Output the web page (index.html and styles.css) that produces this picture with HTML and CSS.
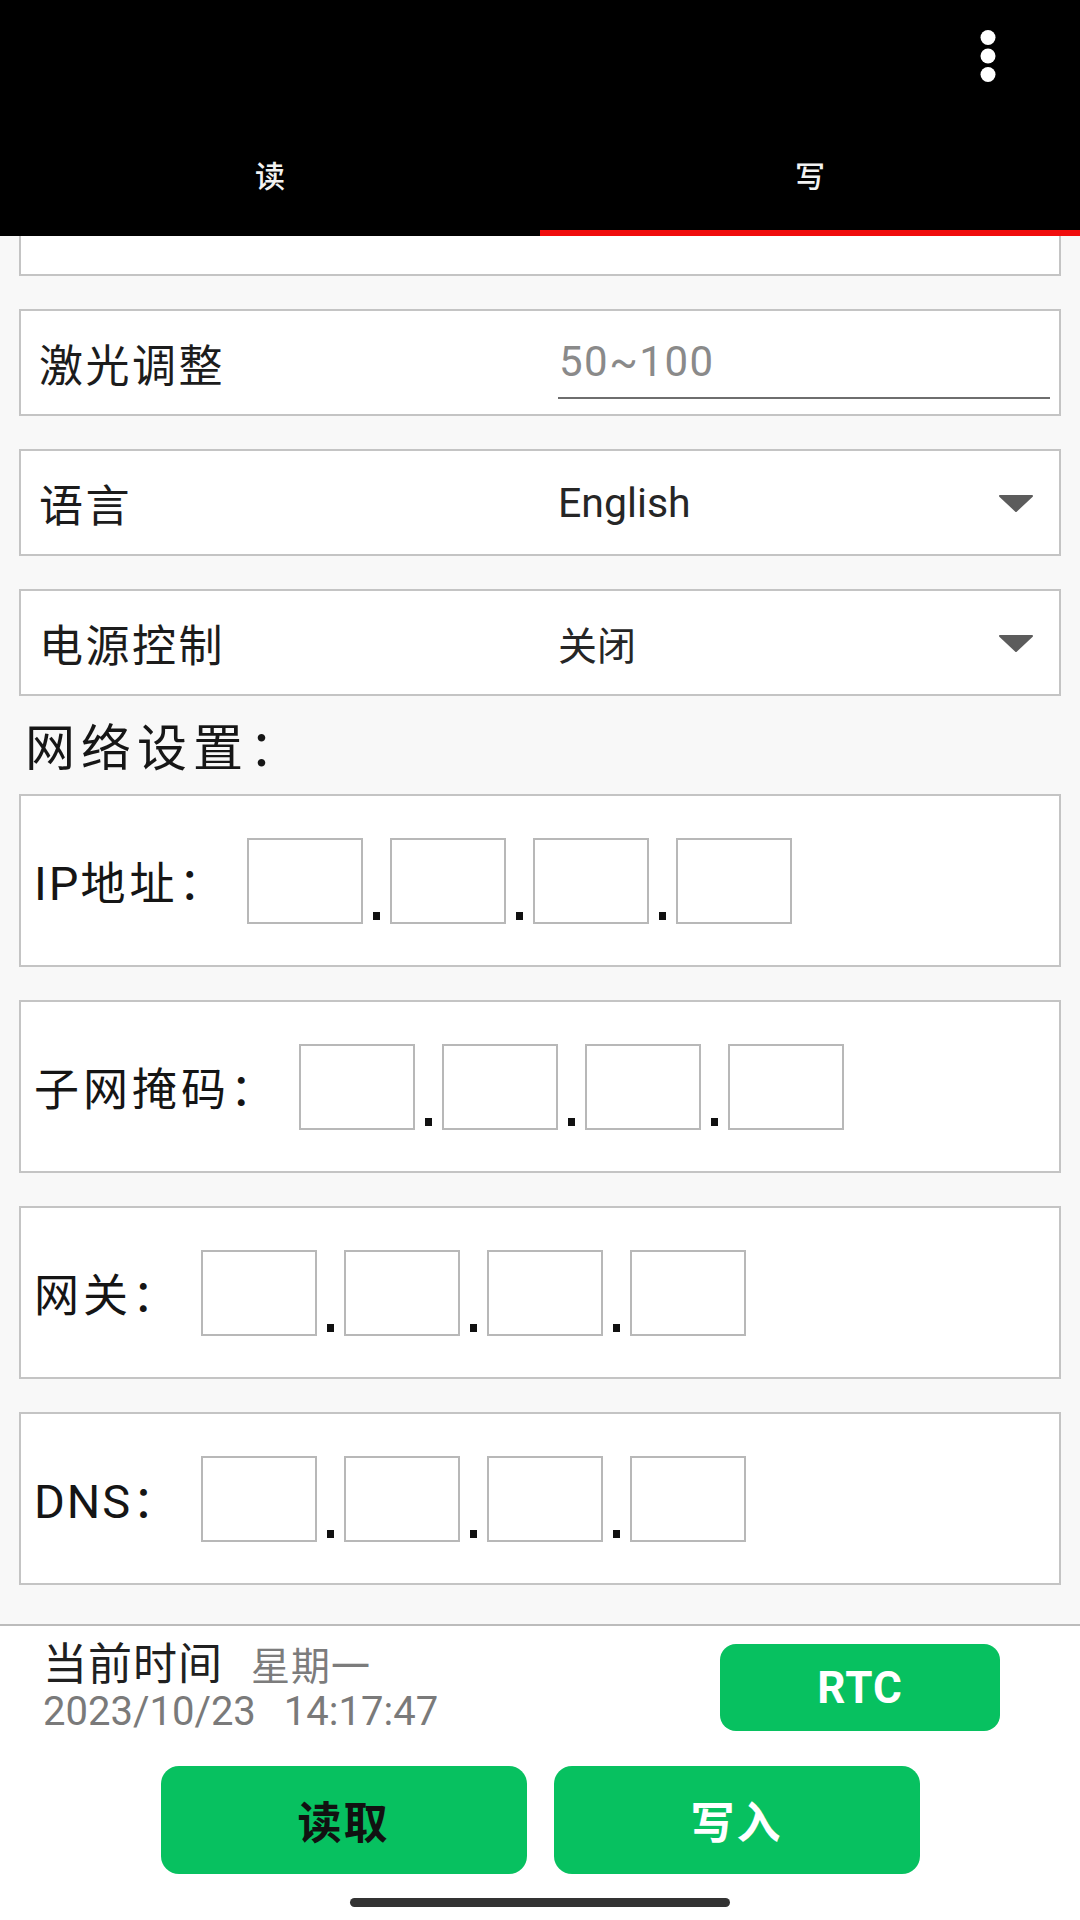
FILE: index.html
```html
<!DOCTYPE html>
<html lang="zh-CN">
<head>
<meta charset="utf-8">
<title>读写</title>
<link rel="stylesheet" href="styles.css">
</head>
<body>
<div class="screen">
  <header class="appbar">
    <div class="toolbar">
      <svg class="more" width="30" height="54" viewBox="0 0 30 54" aria-hidden="true">
        <circle cx="15" cy="8.5" r="7.5" fill="#fff"/>
        <circle cx="15" cy="27" r="7.5" fill="#fff"/>
        <circle cx="15" cy="45.5" r="7.5" fill="#fff"/>
      </svg>
    </div>
    <nav class="tabs">
      <div class="tab">读</div>
      <div class="tab active">写</div>
    </nav>
  </header>

  <main class="content">
    <div class="list">
      <div class="row-card"></div>

      <div class="row-card">
        <span class="label">激光调整</span>
        <div class="field"><span class="hint">50~100</span></div>
      </div>

      <div class="row-card">
        <span class="label">语言</span>
        <div class="select">
          <span class="value">English</span>
          <svg class="caret" width="36" height="18" viewBox="0 0 36 18" aria-hidden="true">
            <path d="M2 2 L34 2 L18 17 Z" fill="#5c5c5c" stroke="#5c5c5c" stroke-width="2" stroke-linejoin="round"/>
          </svg>
        </div>
      </div>

      <div class="row-card">
        <span class="label">电源控制</span>
        <div class="select">
          <span class="value cjk">关闭</span>
          <svg class="caret" width="36" height="18" viewBox="0 0 36 18" aria-hidden="true">
            <path d="M2 2 L34 2 L18 17 Z" fill="#5c5c5c" stroke="#5c5c5c" stroke-width="2" stroke-linejoin="round"/>
          </svg>
        </div>
      </div>

      <h2 class="section-title">网络设置：</h2>

      <div class="net-card">
        <span class="net-label"><span class="latin">IP</span>地址：</span>
        <div class="ip-group">
          <span class="ip-box"></span><span class="sep"><i class="dot"></i></span>
          <span class="ip-box"></span><span class="sep"><i class="dot"></i></span>
          <span class="ip-box"></span><span class="sep"><i class="dot"></i></span>
          <span class="ip-box"></span>
        </div>
      </div>

      <div class="net-card">
        <span class="net-label">子网掩码：</span>
        <div class="ip-group">
          <span class="ip-box"></span><span class="sep"><i class="dot"></i></span>
          <span class="ip-box"></span><span class="sep"><i class="dot"></i></span>
          <span class="ip-box"></span><span class="sep"><i class="dot"></i></span>
          <span class="ip-box"></span>
        </div>
      </div>

      <div class="net-card">
        <span class="net-label">网关：</span>
        <div class="ip-group">
          <span class="ip-box"></span><span class="sep"><i class="dot"></i></span>
          <span class="ip-box"></span><span class="sep"><i class="dot"></i></span>
          <span class="ip-box"></span><span class="sep"><i class="dot"></i></span>
          <span class="ip-box"></span>
        </div>
      </div>

      <div class="net-card">
        <span class="net-label"><span class="latin">DNS</span>：</span>
        <div class="ip-group">
          <span class="ip-box"></span><span class="sep"><i class="dot"></i></span>
          <span class="ip-box"></span><span class="sep"><i class="dot"></i></span>
          <span class="ip-box"></span><span class="sep"><i class="dot"></i></span>
          <span class="ip-box"></span>
        </div>
      </div>
    </div>
  </main>

  <footer class="footer">
    <div class="time-row">
      <div class="time-info">
        <div class="time-title"><span class="now">当前时间</span><span class="weekday">星期一</span></div>
        <div class="datetime"><span>2023/10/23</span><span class="clock">14:17:47</span></div>
      </div>
      <button class="rtc">RTC</button>
    </div>
    <div class="actions">
      <button class="btn btn-read">读取</button>
      <button class="btn btn-write">写入</button>
    </div>
    <div class="home-bar"></div>
  </footer>
</div>
</body>
</html>
```

FILE: styles.css
```css
* { box-sizing: border-box; }

html, body {
  margin: 0;
  padding: 0;
  width: 1080px;
  height: 1920px;
  overflow: hidden;
  font-family: "Noto Sans CJK SC", "Noto Sans", sans-serif;
  color: #1c1c1c;
  background: #f8f8f8;
}

.screen {
  width: 1080px;
  height: 1920px;
  display: flex;
  flex-direction: column;
}

/* ---------- app bar ---------- */
.appbar {
  height: 236px;
  flex: 0 0 236px;
  background: #000;
  display: flex;
  flex-direction: column;
}

.toolbar {
  height: 112px;
  display: flex;
  justify-content: flex-end;
  align-items: center;
  padding-right: 77px;
}

.more { display: block; }

.tabs {
  flex: 1;
  display: flex;
}

.tab {
  flex: 1;
  display: flex;
  align-items: center;
  justify-content: center;
  color: #f2f2f2;
  font-size: 30px;
  font-weight: 500;
  padding-top: 6px;
  border-bottom: 6px solid transparent;
}

.tab.active { border-bottom-color: #f00d0d; }

/* ---------- scroll content ---------- */
.content {
  flex: 1;
  overflow: hidden;
  background: #f8f8f8;
}

.list {
  margin-top: -67px;
  padding: 0 19px;
  display: flex;
  flex-direction: column;
  gap: 33px;
}

.row-card {
  height: 107px;
  flex: 0 0 107px;
  background: #fff;
  border: 2px solid #c4c4c4;
  display: grid;
  grid-template-columns: 519px 1fr;
  align-items: center;
  padding: 0 9px 0 18px;
}

.label {
  font-size: 44px;
  letter-spacing: 2.5px;
  color: #1c1c1c;
}

.field {
  padding-top: 11px;
  padding-bottom: 10px;
  border-bottom: 2px solid #6e6e6e;
}

.hint {
  display: block;
  font-family: Roboto, "Noto Sans", sans-serif;
  font-size: 42px;
  line-height: 50px;
  letter-spacing: 1.5px;
  color: #8a8a8a;
  padding-left: 1px;
}

.select {
  display: flex;
  align-items: center;
  justify-content: space-between;
  padding-right: 16px;
}

.value {
  font-family: Roboto, "Noto Sans CJK SC", sans-serif;
  font-size: 41px;
  color: #262626;
}

.value.cjk {
  font-family: "Noto Sans CJK SC", sans-serif;
  font-size: 39px;
}

.caret { display: block; }

.section-title {
  margin: -33px 0 -33px 0;
  height: 98px;
  flex: 0 0 98px;
  line-height: 96px;
  font-size: 50px;
  font-weight: 400;
  letter-spacing: 6px;
  padding-left: 6px;
  color: #161616;
  white-space: nowrap;
}

.net-card {
  height: 173px;
  flex: 0 0 173px;
  background: #fff;
  border: 2px solid #c4c4c4;
  display: flex;
  align-items: center;
  padding-left: 13px;
}

.net-label {
  font-family: "Noto Sans CJK SC", sans-serif;
  font-size: 45px;
  letter-spacing: 4px;
  color: #151515;
  white-space: nowrap;
}

.net-label .latin {
  font-family: Roboto, "Noto Sans", sans-serif;
  font-size: 47px;
  letter-spacing: 2px;
}

.ip-group {
  display: flex;
  align-items: stretch;
  margin-left: 20px;
}

.ip-box {
  width: 116px;
  height: 86px;
  border: 2px solid #b8b8b8;
  background: #fff;
}

.sep {
  width: 27px;
  display: flex;
  align-items: flex-end;
  justify-content: center;
  padding-bottom: 4px;
}

.dot {
  width: 7px;
  height: 8px;
  background: #111;
  display: block;
}

/* ---------- footer ---------- */
.footer {
  flex: 0 0 296px;
  height: 296px;
  background: #fff;
  border-top: 2px solid #bcbcbc;
}

.time-row {
  display: flex;
  justify-content: space-between;
  align-items: flex-start;
  padding: 18px 80px 0 43px;
}

.time-title {
  height: 34px;
  line-height: 34px;
  white-space: nowrap;
}

.now {
  font-size: 44px;
  color: #202020;
  letter-spacing: 1px;
}

.weekday {
  font-size: 39px;
  color: #7c7c7c;
  margin-left: 28px;
  letter-spacing: 1px;
}

.datetime {
  margin-top: 14px;
  line-height: 40px;
  font-family: Roboto, "Noto Sans", sans-serif;
  font-size: 40px;
  color: #7a7a7a;
  white-space: nowrap;
}

.clock { margin-left: 28px; }

.rtc {
  width: 280px;
  height: 87px;
  border: 0;
  border-radius: 16px;
  background: #07c160;
  color: #fff;
  font-family: Roboto, "Noto Sans", sans-serif;
  font-weight: 700;
  font-size: 44px;
  letter-spacing: 1px;
  padding: 0;
}

.actions {
  display: flex;
  justify-content: center;
  gap: 27px;
  margin-top: 34px;
}

.btn {
  width: 366px;
  height: 108px;
  border: 0;
  border-radius: 18px;
  background: #07c160;
  font-family: "Noto Sans CJK SC", sans-serif;
  font-weight: 700;
  font-size: 44px;
  letter-spacing: 2px;
  padding: 0;
}

.btn-read { color: #111; }
.btn-write { color: #fff; }

.home-bar {
  width: 380px;
  height: 9px;
  border-radius: 5px;
  background: #333;
  margin: 24px auto 0;
}
```
